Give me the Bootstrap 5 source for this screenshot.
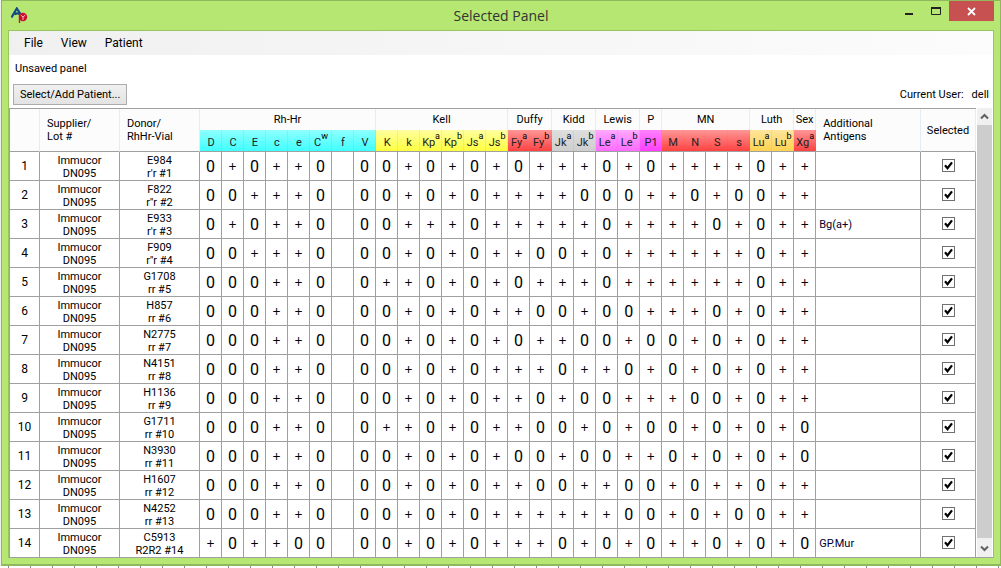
<!DOCTYPE html>
<html lang="en">
<head>
<meta charset="utf-8">
<meta name="viewport" content="width=device-width, initial-scale=1">
<title>Selected Panel</title>
<link href="https://cdn.jsdelivr.net/npm/bootstrap@5.3.0/dist/css/bootstrap.min.css" rel="stylesheet">
<style>
  :root { --frame: #b5e772; --edge: #8fb95c; --rule: #a0a0a0; --soft: #e4edf6; }
  body { background: #f0f0f0; font: 11px/13px Roboto, "Liberation Sans", sans-serif; color: #000; }
  .app-window { margin-left: 1px; background: var(--frame); border: 1px solid var(--edge); border-bottom-width: 2px; padding: 0 6px 6px; }
  .desk-strip { height: 3px; background: repeating-linear-gradient(90deg, #8a8a8a 0 1px, #fff 1px 22px) 8px 0; }
  .titlebar { height: 29px; }
  .titlebar h1 { font: 14px/30px "Open Sans", "Noto Sans", sans-serif; color: #333; }
  .app-logo { left: 3px; top: 6px; }
  .win-controls { right: 0; top: 0; }
  .win-controls button { border: 0; background: none; padding: 0; height: 20px; width: 27px; display: flex; }
  .win-controls .close-btn { width: 45px; background: #c75050; }
  .client { background: #fff; border: 1px solid #99c560; border-bottom-color: var(--rule); }
  .menubar { height: 24px; background: linear-gradient(90deg, #f0f0f0, #fcfcfc); padding-left: 6px; }
  .menubar a { font-size: 12px; line-height: 24px; color: #000; padding: 0 9px; }
  .status { padding: 7px 6px 3px; }
  .tools { padding: 6px 4px 3px; }
  .patient-btn { font-size: 11px; line-height: 13px; padding: 3px 6px; border: 1px solid #acacac; border-radius: 0; background: linear-gradient(#f0f0f0, #e3e3e3); color: #000; }
  .panel-grid { table-layout: fixed; width: 100%; border-collapse: separate; border-spacing: 0; border: solid var(--rule); border-width: 1px 0 0 1px; }
  .panel-grid th, .panel-grid td { padding: 0; font-weight: 400; text-align: center; vertical-align: middle; border: solid var(--rule); border-width: 0 1px 1px 0; }
  .panel-grid tbody tr { height: 29px; }
  .panel-grid tbody tr:last-child { height: 28px; }
  .panel-grid tbody tr:last-child > * { border-bottom: 0; }
  .panel-grid tbody th { font-size: 12px; }
  .panel-grid tbody td { padding-top: 1px; }
  .panel-grid thead th { background: #fcfcfc; border-right-color: var(--soft); }
  .panel-grid thead th.head-text { text-align: left; padding-left: 7px; }
  .panel-grid thead tr:first-child { height: 21px; }
  .panel-grid thead tr:nth-child(2) { height: 22px; }
  .panel-grid thead th.group { border-bottom: 0; white-space: nowrap; }
  .panel-grid thead th.antigen { vertical-align: bottom; white-space: nowrap; line-height: 15px; padding-bottom: 1px; color: #222; border-right: 0; background: linear-gradient(var(--from), var(--to)); box-shadow: inset -1px 0 rgba(128,128,128,.12); }
  .antigen sup { font-size: 9px; line-height: 0; top: -7px; color: #000; }
  .cyan { --from: #8effff; --to: #40ffff; }
  .yellow { --from: #ffffa0; --to: #ffff40; }
  .red { --from: #ff9696; --to: #ff4242; }
  .gray { --from: #dedede; --to: #cecece; }
  .pink { --from: #ffa8ff; --to: #ff6cff; }
  .magenta { --from: #ff80ff; --to: #ff40ff; }
  .gold { --from: #ffe59c; --to: #ffd350; }
  .panel-grid td.result { font-size: 16px; line-height: 20px; padding-top: 2px; }
  .panel-grid td.positive { font: 14px/20px "Open Sans", "Noto Sans", sans-serif; }
  .panel-grid td.extra { text-align: left; padding-left: 3px; color: #000030; }
  .col-num { width: 30px; } .col-name { width: 80px; } .col-res { width: 22px; } .col-sel { width: 55px; }
  .pick { appearance: none; display: block; width: 13px; height: 13px; margin: 0 auto 3px; border: 1px solid #707070; background: #fff; }
  .pick:checked { background: #fff url("data:image/svg+xml,%3Csvg xmlns='http://www.w3.org/2000/svg' viewBox='0 0 11 11'%3E%3Cpath d='M2 5.3L4.5 8.2L9 2.3' fill='none' stroke='%23000' stroke-width='2.2'/%3E%3C/svg%3E") center/11px no-repeat; }
  .scroller { width: 15px; margin: 0 1px; background: #f0f0f0; }
  .scroller button { border: 0; padding: 0; height: 17px; background: #f0f0f0; display: flex; align-items: center; justify-content: center; }
  .scroller .thumb { background: #cdcdcd; margin-bottom: 2px; }
</style>
</head>
<body>
<div class="app-window">
  <header class="titlebar position-relative text-center">
    <svg class="app-logo position-absolute" width="18" height="18" viewBox="0 0 18 18" aria-hidden="true">
      <path d="M0.500 10.500L2.500 7L5.800 1.500L9.500 7M3.500 7.500Q6 5.500 9 7" fill="none" stroke="#124a86" stroke-width="2.2"/>
      <path d="M8.500 7V16" stroke="#c41230" stroke-width="1.3"/>
      <circle cx="12" cy="10" r="4.200" fill="#c8102e"/>
      <path d="M9.800 8L12 10L14.400 8M12 10V13" fill="none" stroke="#f3b6bd" stroke-width="1"/>
    </svg>
    <h1 class="m-0">Selected Panel</h1>
    <div class="win-controls position-absolute d-flex">
      <button type="button" aria-label="Minimize"><svg width="27" height="20"><path d="M10 13H18" stroke="#222" stroke-width="2"/></svg></button>
      <button type="button" aria-label="Maximize"><svg width="27" height="20"><path d="M9.500 6.500H18.500V13.500H9.500Z" fill="none" stroke="#222"/><path d="M9 7H19" stroke="#222" stroke-width="2"/></svg></button>
      <button type="button" class="close-btn" aria-label="Close"><svg width="45" height="20"><path d="M19 7L26 14M26 7L19 14" stroke="#fff" stroke-width="1.800"/></svg></button>
    </div>
  </header>
  <main class="client">
    <nav class="menubar d-flex">
      <a class="text-decoration-none" href="#">File</a>
      <a class="text-decoration-none" href="#">View</a>
      <a class="text-decoration-none" href="#">Patient</a>
    </nav>
    <div class="status">Unsaved panel</div>
    <div class="tools d-flex justify-content-between align-items-center">
      <button type="button" class="btn patient-btn">Select/Add Patient...</button>
      <div class="d-flex gap-2"><span>Current User:</span><span>dell</span></div>
    </div>
    <div class="d-flex">
      <div class="flex-grow-1">
        <table class="panel-grid">
          <colgroup><col class="col-num"><col class="col-name" span="2"><col class="col-res" span="28"><col><col class="col-sel"></colgroup>
          <thead>
            <tr id="groups">
              <th rowspan="2"></th>
              <th rowspan="2" class="head-text">Supplier/<br>Lot #</th>
              <th rowspan="2" class="head-text">Donor/<br>RhHr-Vial</th>
            </tr>
            <tr id="antigens"></tr>
          </thead>
          <tbody id="cells"></tbody>
        </table>
      </div>
      <div class="scroller d-flex flex-column flex-shrink-0">
        <button type="button" aria-label="Scroll up"><svg width="9" height="7"><path d="M1 5.500L4.500 2L8 5.500" fill="none" stroke="#606060" stroke-width="2"/></svg></button>
        <div class="thumb flex-grow-1"></div>
        <button type="button" aria-label="Scroll down"><svg width="9" height="7"><path d="M1 1.500L4.500 5L8 1.500" fill="none" stroke="#606060" stroke-width="2"/></svg></button>
      </div>
    </div>
  </main>
</div>
<div class="desk-strip"></div>
<script src="https://cdn.jsdelivr.net/npm/bootstrap@5.3.0/dist/js/bootstrap.bundle.min.js"></script>
<script>
  // Blood group systems: name, header colour, antigens ("^" starts a superscript)
  const systems = [
    ['Rh-Hr', 'cyan', 'D C E c e C^w f V'], ['Kell', 'yellow', 'K k Kp^a Kp^b Js^a Js^b'],
    ['Duffy', 'red', 'Fy^a Fy^b'], ['Kidd', 'gray', 'Jk^a Jk^b'], ['Lewis', 'pink', 'Le^a Le^b'],
    ['P', 'magenta', 'P1'], ['MN', 'red', 'M N S s'], ['Luth', 'gold', 'Lu^a Lu^b'], ['Sex', 'red', 'Xg^a']
  ];
  // Donor, phenotype, reactions per system ("_" is not tested), additional antigens
  const donors = [
    ['E984', "r'r", '0+0++0_0 0+0+0+ 0+ ++ 0+ 0 ++++ 0+ +'],
    ['F822', "r''r", '00+++0_0 0+0+0+ ++ +0 00 + +0+0 0+ +'],
    ['E933', "r'r", '0+0++0_0 0+++0+ ++ ++ 0+ + ++0+ 0+ +', 'Bg(a+)'],
    ['F909', "r''r", '00+++0_0 0+0+0+ +0 0+ 0+ + ++++ 0+ +'],
    ['G1708', 'rr', '000++0_0 ++0+0+ 0+ ++ 0+ + ++++ 0+ +'],
    ['H857', 'rr', '000++0_0 0+0+0+ +0 0+ 00 + ++0+ 0+ +'],
    ['N2775', 'rr', '000++0_0 0+0+0+ 0+ +0 0+ 0 0+0+ 0+ +'],
    ['N4151', 'rr', '000++0_0 0+0+0+ ++ 0+ +0 + 0+0+ 0+ +'],
    ['H1136', 'rr', '000++0_0 0+0+0+ +0 +0 0+ + +00+ 0+ +'],
    ['G1711', 'rr', '000++0_0 ++0+0+ +0 0+ 0+ 0 0+0+ 0+ 0'],
    ['N3930', 'rr', '000++0_0 0+0+0+ 00 +0 0+ + 0+0+ 0+ 0'],
    ['H1607', 'rr', '000++0_0 0+0+0+ +0 0+ +0 0 +0++ 0+ +'],
    ['N4252', 'rr', '000++0_0 0+0+0+ ++ ++ +0 0 +0+0 0+ +'],
    ['C5913', 'R2R2', '+0++00_0 0+0+0+ ++ 0+ 0+ 0 ++0+ 0+ 0', 'GP.Mur']
  ];
  const groups = document.getElementById('groups'), antigens = document.getElementById('antigens');
  for (const [name, colour, list] of systems) {
    const items = list.split(' ');
    groups.insertAdjacentHTML('beforeend', `<th class="group" colspan="${items.length}">${name}</th>`);
    for (const a of items) {
      const [base, up] = a.split('^');
      antigens.insertAdjacentHTML('beforeend', `<th class="antigen ${colour}">${base}${up ? `<sup>${up}</sup>` : ''}</th>`);
    }
  }
  groups.insertAdjacentHTML('beforeend', '<th rowspan="2" class="head-text">Additional<br>Antigens</th><th rowspan="2">Selected</th>');
  document.getElementById('cells').innerHTML = donors.map(([id, type, res, extra], i) => `<tr>
    <th scope="row">${i + 1}</th><td>Immucor<br>DN095</td><td>${id}<br>${type} #${i + 1}</td>
    ${[...res.replace(/ /g, '')].map(r => `<td class="result${r === '+' ? ' positive' : ''}">${r === '_' ? '' : r}</td>`).join('')}
    <td class="extra">${extra || ''}</td><td><input type="checkbox" class="pick" aria-label="Select ${id}" checked></td></tr>`).join('');
</script>
</body>
</html>
